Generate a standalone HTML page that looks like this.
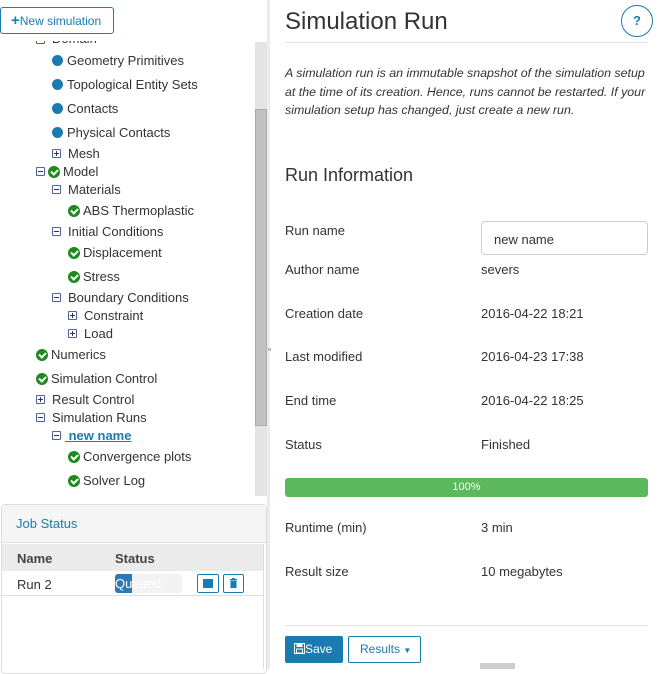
<!DOCTYPE html>
<html><head><meta charset="utf-8"><style>
*{box-sizing:border-box;margin:0;padding:0}
body{width:658px;height:669px;overflow:hidden;background:#fff;font-family:"Liberation Sans",sans-serif;color:#333;position:relative}
.a{position:absolute;white-space:nowrap}
.t{font-size:13px;line-height:16px}
.dot{position:absolute;width:11px;height:11px;border-radius:50%;background:#1a7bb0}
.chk{position:absolute;width:12px;height:12px;border-radius:50%;background:#1e8a1e}
.chk:after{content:"";position:absolute;left:3px;top:2.5px;width:5px;height:3px;border-left:2px solid #fff;border-bottom:2px solid #fff;transform:rotate(-45deg)}
.bx{position:absolute;width:9px;height:9px;border:1px solid #5560a0;border-radius:1px;background:#fff}
.bx:before{content:"";position:absolute;left:1px;top:3px;width:5px;height:1px;background:#334}
.bx.p:after{content:"";position:absolute;left:3px;top:1px;width:1px;height:5px;background:#334}
.lbl{font-size:13px;color:#333}
</style></head><body>
<div class="a" style="left:0;top:41px;width:255px;height:455px;overflow:hidden">
<div style="position:relative;top:-41px">
<span class="bx" style="left:36px;top:35px"></span><span class="a t" style="left:52px;top:31px">Domain</span>
<span class="dot" style="left:52px;top:55px"></span><span class="a t" style="left:67px;top:53px">Geometry Primitives</span>
<span class="dot" style="left:52px;top:79px"></span><span class="a t" style="left:67px;top:77px">Topological Entity Sets</span>
<span class="dot" style="left:52px;top:103px"></span><span class="a t" style="left:67px;top:101px">Contacts</span>
<span class="dot" style="left:52px;top:127px"></span><span class="a t" style="left:67px;top:125px">Physical Contacts</span>
<span class="bx p" style="left:52px;top:149px"></span><span class="a t" style="left:68px;top:146px">Mesh</span>
<span class="bx" style="left:36px;top:167px"></span><span class="chk" style="left:48px;top:166px"></span><span class="a t" style="left:63px;top:164px">Model</span>
<span class="bx" style="left:52px;top:185px"></span><span class="a t" style="left:68px;top:182px">Materials</span>
<span class="chk" style="left:68px;top:205px"></span><span class="a t" style="left:83px;top:203px">ABS Thermoplastic</span>
<span class="bx" style="left:52px;top:227px"></span><span class="a t" style="left:68px;top:224px">Initial Conditions</span>
<span class="chk" style="left:68px;top:247px"></span><span class="a t" style="left:83px;top:245px">Displacement</span>
<span class="chk" style="left:68px;top:271px"></span><span class="a t" style="left:83px;top:269px">Stress</span>
<span class="bx" style="left:52px;top:293px"></span><span class="a t" style="left:68px;top:290px">Boundary Conditions</span>
<span class="bx p" style="left:68px;top:311px"></span><span class="a t" style="left:84px;top:308px">Constraint</span>
<span class="bx p" style="left:68px;top:329px"></span><span class="a t" style="left:84px;top:326px">Load</span>
<span class="chk" style="left:36px;top:349px"></span><span class="a t" style="left:51px;top:347px">Numerics</span>
<span class="chk" style="left:36px;top:373px"></span><span class="a t" style="left:51px;top:371px">Simulation Control</span>
<span class="bx p" style="left:36px;top:395px"></span><span class="a t" style="left:52px;top:392px">Result Control</span>
<span class="bx" style="left:36px;top:413px"></span><span class="a t" style="left:52px;top:410px">Simulation Runs</span>
<span class="bx" style="left:52px;top:431px"></span><span class="a t" style="left:65px;top:428px;font-weight:bold;color:#1a7bb0;text-decoration:underline">&nbsp;new name</span>
<span class="chk" style="left:68px;top:451px"></span><span class="a t" style="left:83px;top:449px">Convergence plots</span>
<span class="chk" style="left:68px;top:475px"></span><span class="a t" style="left:83px;top:473px">Solver Log</span>
</div></div>
<div class="a" style="left:255px;top:42px;width:12px;height:454px;background:#e4e4e4"></div>
<div class="a" style="left:255px;top:109px;width:12px;height:317px;background:#c1c1c1;border:1px solid #aaa"></div>
<div class="a" style="left:267px;top:0;width:3px;height:669px;background:#ececec"></div>
<div class="a" style="left:268px;top:347px;font-size:9px;color:#555">"</div>
<div class="a" style="left:0;top:7px;width:114px;height:27px;border:1px solid #1a7bb0;border-radius:3px;background:#fff;color:#1a7bb0;font-size:12px;line-height:25px;padding-left:10px">
<b style="font-size:15px">+</b>New simulation</div>
<div class="a" style="left:1px;top:504px;width:266px;height:170px;border:1px solid #ddd;border-radius:4px;background:#fff"></div>
<div class="a" style="left:2px;top:505px;width:264px;height:38px;background:#f5f5f5;border-bottom:1px solid #ddd"></div>
<div class="a" style="left:16px;top:516px;font-size:13px;color:#1a7bb0">Job Status</div>
<div class="a" style="left:2px;top:544px;width:262px;height:27px;background:#ebebeb"></div>
<div class="a" style="left:263px;top:544px;width:1px;height:125px;background:#ddd"></div>
<div class="a" style="left:17px;top:551px;font-size:13px;font-weight:bold;color:#444">Name</div>
<div class="a" style="left:115px;top:551px;font-size:13px;font-weight:bold;color:#444">Status</div>
<div class="a" style="left:2px;top:595px;width:262px;height:1px;background:#ddd"></div>
<div class="a" style="left:17px;top:577px;font-size:13px">Run 2</div>
<div class="a" style="left:115px;top:574px;width:67px;height:19px;background:#f2f2f2;border-radius:3px;overflow:hidden">
<div style="position:absolute;left:0;top:0;width:17px;height:19px;background:#2f78b4"></div>
<span style="position:absolute;left:0;top:2px;font-size:13px;color:#fff">Queued</span></div>
<div class="a" style="left:197px;top:574px;width:22px;height:19px;border:1px solid #1a7bb0;border-radius:2px"><div style="position:absolute;left:5px;top:4px;width:10px;height:9px;background:#1a7bb0"></div></div>
<div class="a" style="left:223px;top:574px;width:21px;height:19px;border:1px solid #1a7bb0;border-radius:2px">
<svg width="19" height="17" style="position:absolute;left:0;top:0"><rect x="6" y="4" width="7" height="1.5" fill="#1a7bb0"/><rect x="8" y="3" width="3" height="1.5" fill="#1a7bb0"/><rect x="6.5" y="6" width="6" height="7" fill="#1a7bb0"/></svg></div>
<div class="a" style="left:285px;top:8px;font-size:24px;color:#333">Simulation Run</div>
<div class="a" style="left:285px;top:42px;width:363px;height:1px;background:#e5e5e5"></div>
<div class="a" style="left:621px;top:5px;width:32px;height:32px;border:1.5px solid #1a7bb0;border-radius:50%;color:#1a7bb0;font-size:13px;font-weight:bold;text-align:center;line-height:29px">?</div>
<div class="a" style="left:285px;top:64px;font-size:12.4px;font-style:italic;line-height:18.5px;color:#333">A simulation run is an immutable snapshot of the simulation setup<br>at the time of its creation. Hence, runs cannot be restarted. If your<br>simulation setup has changed, just create a new run.</div>
<div class="a" style="left:285px;top:165px;font-size:18px">Run Information</div>
<div class="a lbl" style="left:285px;top:223px">Run name</div>
<div class="a" style="left:481px;top:221px;width:167px;height:34px;border:1px solid #ccc;border-radius:4px;font-size:13px;padding:10px 12px">new name</div>
<div class="a lbl" style="left:285px;top:262px">Author name</div><div class="a lbl" style="left:481px;top:262px">severs</div>
<div class="a lbl" style="left:285px;top:306px">Creation date</div><div class="a lbl" style="left:481px;top:306px">2016-04-22 18:21</div>
<div class="a lbl" style="left:285px;top:349px">Last modified</div><div class="a lbl" style="left:481px;top:349px">2016-04-23 17:38</div>
<div class="a lbl" style="left:285px;top:393px">End time</div><div class="a lbl" style="left:481px;top:393px">2016-04-22 18:25</div>
<div class="a lbl" style="left:285px;top:437px">Status</div><div class="a lbl" style="left:481px;top:437px">Finished</div>
<div class="a" style="left:285px;top:478px;width:363px;height:19px;background:#5cb85c;border-radius:3px;color:#fff;font-size:11px;text-align:center;line-height:19px">100%</div>
<div class="a lbl" style="left:285px;top:520px">Runtime (min)</div><div class="a lbl" style="left:481px;top:520px">3 min</div>
<div class="a lbl" style="left:285px;top:564px">Result size</div><div class="a lbl" style="left:481px;top:564px">10 megabytes</div>
<div class="a" style="left:285px;top:625px;width:363px;height:1px;background:#e5e5e5"></div>
<div class="a" style="left:285px;top:636px;width:58px;height:27px;background:#1a7bb0;border-radius:2px;color:#fff;font-size:12px;line-height:27px;padding-left:9px">
<svg width="11" height="11" style="vertical-align:-1px"><rect x="0.5" y="0.5" width="10" height="10" fill="none" stroke="#fff"/><rect x="2.5" y="1" width="6" height="3" fill="#fff"/><rect x="2.5" y="6" width="6" height="4" fill="none" stroke="#fff"/></svg>Save</div>
<div class="a" style="left:348px;top:636px;width:73px;height:27px;border:1px solid #1a7bb0;border-radius:2px;color:#1a7bb0;font-size:12px;line-height:25px;padding-left:11px">Results <span style="font-size:8px">&#9660;</span></div>
<div class="a" style="left:480px;top:663px;width:35px;height:6px;background:#ccc"></div>
</body></html>
